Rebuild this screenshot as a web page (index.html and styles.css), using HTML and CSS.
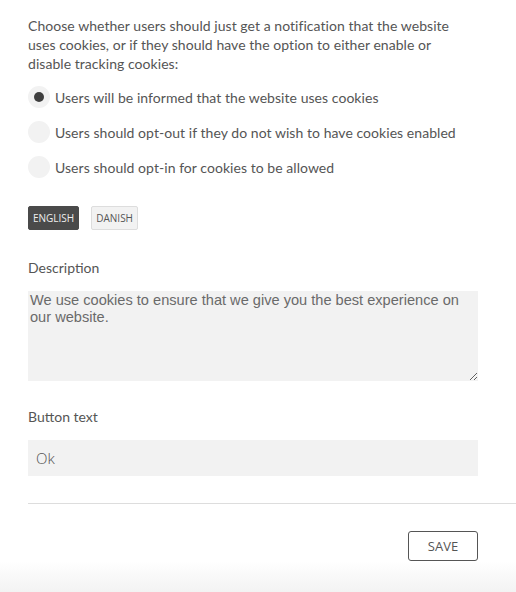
FILE: index.html
```html
<!DOCTYPE html>
<html>
<head>
<meta charset="utf-8">
<link rel="stylesheet" href="styles.css">
</head>
<body>
<div class="panel">
  <div class="content">
    <p class="intro">Choose whether users should just get a notification that the website uses cookies, or if they should have the option to either enable or disable tracking cookies:</p>
    <div class="radios">
      <label class="radio"><span class="dot checked"></span><span>Users will be informed that the website uses cookies</span></label>
      <label class="radio"><span class="dot"></span><span>Users should opt-out if they do not wish to have cookies enabled</span></label>
      <label class="radio"><span class="dot"></span><span>Users should opt-in for cookies to be allowed</span></label>
    </div>
    <div class="langs">
      <button class="lang active">ENGLISH</button>
      <button class="lang">DANISH</button>
    </div>
    <div class="label desc-label">Description</div>
    <textarea class="area">We use cookies to ensure that we give you the best experience on our website.</textarea>
    <div class="label btn-label">Button text</div>
    <input class="field" type="text" value="Ok">
  </div>
  <div class="rule"></div>
  <div class="actions">
    <button class="save">SAVE</button>
  </div>
  <div class="shade"></div>
</div>
</body>
</html>
```

FILE: styles.css
```css
html, body {
  margin: 0;
  padding: 0;
  background: #fff;
}
body {
  font-family: Lato, "Noto Sans", sans-serif;
  color: #4a4a4a;
  width: 516px;
  height: 592px;
  overflow: hidden;
}
.panel {
  display: flex;
  flex-direction: column;
  height: 592px;
}
.content {
  padding: 16px 0 0 28px;
  width: 450px;
  display: flex;
  flex-direction: column;
}
.intro {
  margin: 0;
  max-width: 432px;
  font-size: 14px;
  letter-spacing: 0.05px;
  line-height: 19px;
  color: #555;
}
.radios {
  display: flex;
  flex-direction: column;
  gap: 13px;
  margin-top: 13px;
}
.radio {
  display: flex;
  align-items: center;
  gap: 5px;
  font-size: 14px;
  letter-spacing: 0.05px;
  height: 22px;
  color: #555;
}
.dot {
  width: 22px;
  height: 22px;
  border-radius: 50%;
  background: #f2f2f2;
  display: flex;
  align-items: center;
  justify-content: center;
  flex: none;
}
.dot.checked::after {
  content: "";
  width: 10px;
  height: 10px;
  border-radius: 50%;
  background: #3f3f3f;
}
.langs {
  display: flex;
  gap: 12px;
  margin-top: 28px;
}
.lang {
  height: 24px;
  padding: 0 4px;
  font-family: "Open Sans", sans-serif;
  font-size: 10px;
  border: 1px solid #ddd;
  border-radius: 2px;
  background: #f2f2f2;
  color: #555;
}
.lang.active {
  background: #4a4a4a;
  border-color: #4a4a4a;
  color: #eee;
}
.label {
  font-size: 14px;
  line-height: 19px;
  color: #555;
}
.desc-label {
  margin-top: 28px;
}
.area {
  margin-top: 14px;
  box-sizing: border-box;
  width: 450px;
  height: 90px;
  border: none;
  background: #f2f2f2;
  font-family: "Liberation Sans", Arial, sans-serif;
  font-size: 14.6px;
  line-height: 17px;
  color: #6a6a6a;
  padding: 1px 2px;
  resize: vertical;
  outline: none;
}
.btn-label {
  margin-top: 26px;
}
.field {
  margin-top: 14px;
  box-sizing: border-box;
  width: 450px;
  height: 36px;
  border: none;
  background: #f2f2f2;
  font-family: "Open Sans", sans-serif;
  font-weight: 300;
  font-size: 15px;
  color: #555;
  padding: 0 8px;
  outline: none;
}
.rule {
  margin: 27px 0 0 28px;
  height: 1px;
  background: #ddd;
}
.actions {
  display: flex;
  justify-content: flex-end;
  padding: 27px 38px 0 0;
}
.save {
  width: 70px;
  height: 30px;
  box-sizing: border-box;
  border: 1px solid #555;
  border-radius: 3px;
  background: #fff;
  font-family: "Open Sans", sans-serif;
  font-size: 13px;
  color: #555;
}
.shade {
  flex: 1;
  background: linear-gradient(#fff, #f3f3f3);
}
```
